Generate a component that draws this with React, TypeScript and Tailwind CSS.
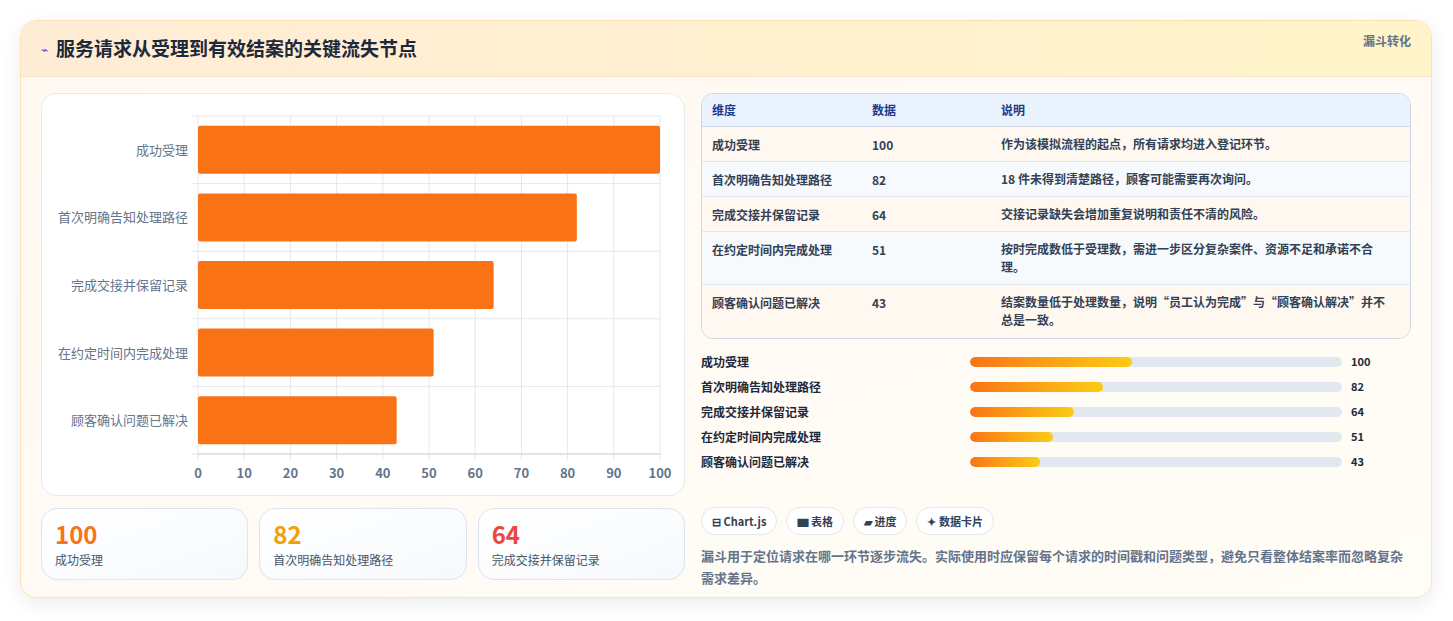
import React from "react";

const rows = [
  { n: "成功受理", v: 100, d: "作为该模拟流程的起点，所有请求均进入登记环节。", h: "h-[35px]" },
  { n: "首次明确告知处理路径", v: 82, d: "18 件未得到清楚路径，顾客可能需要再次询问。", h: "h-[35px]" },
  { n: "完成交接并保留记录", v: 64, d: "交接记录缺失会增加重复说明和责任不清的风险。", h: "h-[35px]" },
  { n: "在约定时间内完成处理", v: 51, d: "按时完成数低于受理数，需进一步区分复杂案件、资源不足和承诺不合理。", h: "h-[53px]" },
  { n: "顾客确认问题已解决", v: 43, d: "结案数量低于处理数量，说明“员工认为完成”与“顾客确认解决”并不总是一致。", h: "h-[53px]" },
];

function Chart() {
  const x0 = 196, x1 = 658, y0 = 115, y1 = 453;
  const W = x1 - x0;
  const rh = (y1 - y0) / 5;
  return (
    <svg width="644" height="403" viewBox="40 93 644 403" className="block">
      {Array.from({ length: 11 }).map((_, i) => {
        const x = x0 + (W * i) / 10;
        return (
          <g key={i}>
            <line x1={x} y1={y0} x2={x} y2={y1 + 6} stroke="#e5e7eb" />
            <text x={x} y={477} textAnchor="middle" fontSize="13" fill="#64748b" fontWeight="600">{i * 10}</text>
          </g>
        );
      })}
      {Array.from({ length: 6 }).map((_, i) => (
        <line key={i} x1={x0 - 6} x2={x1} y1={y0 + rh * i} y2={y0 + rh * i} stroke="#e5e7eb" />
      ))}
      <line x1={x0} x2={x1} y1={y1} y2={y1} stroke="#cbd5e1" />
      {rows.map((r, i) => {
        const cy = y0 + rh * i + rh / 2;
        return (
          <g key={i}>
            <rect x={x0} y={cy - 24} width={(W * r.v) / 100} height={48} fill="#f97316" rx="2" />
            <text x={186} y={cy + 5} textAnchor="end" fontSize="13" fill="#64748b">{r.n}</text>
          </g>
        );
      })}
    </svg>
  );
}

export default function App() {
  return (
    <div className="w-[1453px] h-[621px] bg-white pt-[20px] pl-[20px]" style={{ fontFamily: '"Noto Sans CJK SC", "Noto Sans", sans-serif' }}>
      <div className="w-[1412px] h-[578px] rounded-2xl border border-[#fde2b8] overflow-hidden bg-gradient-to-br from-[#fff8f1] to-[#fffdf7] shadow-[0_6px_20px_rgba(0,0,0,0.08)]">
        <div className="h-[56px] flex items-center justify-between px-5 bg-gradient-to-r from-[#ffecd6] to-[#fff4c9] border-b border-[#f8e4cc]">
          <div className="flex items-center gap-2">
            <span className="text-[#4f46e5] text-[12px]">⌁</span>
            <span className="text-[19px] font-bold text-[#1e293b]">服务请求从受理到有效结案的关键流失节点</span>
          </div>
          <span className="text-[12px] font-bold text-[#64748b] -mt-4">漏斗转化</span>
        </div>
        <div className="flex gap-4 px-5 pt-4">
          <div className="w-[644px] flex flex-col gap-3">
            <div className="h-[403px] bg-white rounded-2xl border border-[#e7eaf0]"><Chart /></div>
            <div className="flex gap-[11px]">
              {[["100", "成功受理", "text-[#f97316]"], ["82", "首次明确告知处理路径", "text-[#f59e0b]"], ["64", "完成交接并保留记录", "text-[#ef4444]"]].map(([v, l, c]) => (
                <div key={l} className="w-[208px] h-[72px] rounded-2xl border border-[#dbe4f0] bg-gradient-to-br from-white to-[#f6f9fc] px-[13px] pt-[10px]">
                  <div className={`text-[24px] font-bold leading-[30px] ${c}`}>{v}</div>
                  <div className="text-[12px] text-[#475569] mt-[2px]">{l}</div>
                </div>
              ))}
            </div>
          </div>
          <div className="w-[713px] flex flex-col">
            <div className="rounded-xl border border-[#cfd8e3] overflow-hidden text-[12px] text-[#334155]">
              <div className="h-[33px] flex items-center bg-[#eaf3fd] border-b border-[#cfd8e3] font-bold text-[#1e3a8a]">
                <div className="w-[170px] pl-[10px]">维度</div><div className="w-[129px]">数据</div><div>说明</div>
              </div>
              {rows.map((r, i) => (
                <div key={i} className={`${r.h} flex items-start pt-[9px] border-b last:border-b-0 border-[#e2e8f0] font-semibold ${i % 2 === 0 ? "bg-[#fff8f0]" : "bg-[#f7fafd]"}`}>
                  <div className="w-[170px] pl-[10px]">{r.n}</div>
                  <div className="w-[129px]">{r.v}</div>
                  <div className="w-[390px] leading-[18px] -mt-[1px]">{r.d}</div>
                </div>
              ))}
            </div>
            <div className="mt-[10px] flex flex-col text-[12px] font-semibold text-[#1e293b]">
              {rows.map((r, i) => (
                <div key={i} className="h-[25px] flex items-center">
                  <div className="w-[269px]">{r.n}</div>
                  <div className="w-[372px] h-[10px] rounded-full bg-[#e2e8f0] overflow-hidden">
                    <div className="h-full rounded-full bg-gradient-to-r from-[#f97316] to-[#facc15]" style={{ width: `${r.v * 0.435}%` }} />
                  </div>
                  <div className="ml-[9px] font-bold text-[11px]">{r.v}</div>
                </div>
              ))}
            </div>
            <div className="mt-[33px] flex gap-[9px] text-[11px] font-bold text-[#334155]">
              {["⊟ Chart.js", "▆ 表格", "▰ 进度", "✦ 数据卡片"].map((t) => (
                <span key={t} className="h-[28px] px-[10px] flex items-center rounded-full border border-[#e2e8f0] bg-white">{t}</span>
              ))}
            </div>
            <p className="mt-[10px] text-[13px] leading-[22px] text-[#64748b] font-semibold">漏斗用于定位请求在哪一环节逐步流失。实际使用时应保留每个请求的时间戳和问题类型，避免只看整体结案率而忽略复杂需求差异。</p>
          </div>
        </div>
      </div>
    </div>
  );
}
